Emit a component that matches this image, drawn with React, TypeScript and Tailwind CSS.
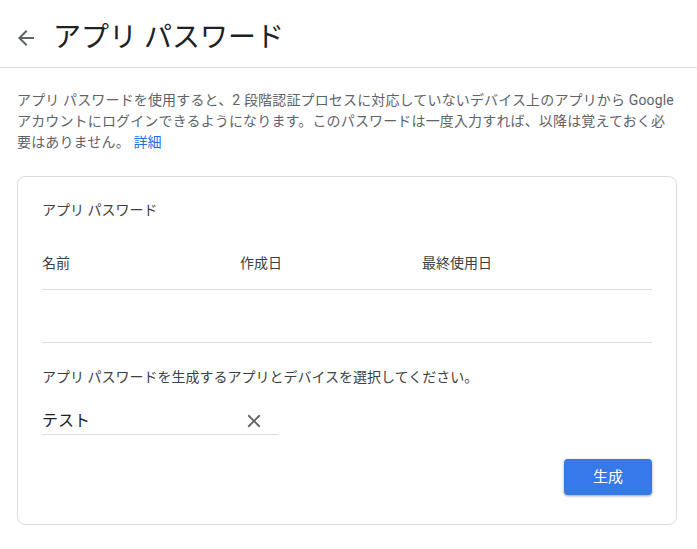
import React from "react";

const font = { fontFamily: "Roboto, 'Noto Sans CJK JP', sans-serif" };

const BackIcon = () => (
  <svg width="24" height="24" viewBox="0 0 24 24" className="fill-[#5f6368]">
    <path d="M20 11H7.83l5.59-5.59L12 4l-8 8 8 8 1.41-1.41L7.83 13H20v-2z" />
  </svg>
);

const CloseIcon = () => (
  <svg width="22" height="22" viewBox="0 0 24 24" className="fill-[#5f6368]">
    <path d="M19 6.41L17.59 5 12 10.59 6.41 5 5 6.41 10.59 12 5 17.59 6.41 19 12 13.41 17.59 19 19 17.59 13.41 12z" />
  </svg>
);

export default function App() {
  return (
    <div className="min-h-screen bg-white" style={font}>
      <header className="h-[68px] flex items-center pt-2 pl-[14px] gap-[15px] border-b border-[#dadce0]">
        <BackIcon />
        <h1 className="text-[28px] text-[#202124] leading-9">アプリ パスワード</h1>
      </header>

      <div className="pl-[17px] pr-[20px]">
        <p className="mt-[22px] text-[14px] leading-[21px] tracking-[0.15px] text-[#5f6368]">
          アプリ パスワードを使用すると、2 段階認証プロセスに対応していないデバイス上のアプリから Google
          アカウントにログインできるようになります。このパスワードは一度入力すれば、以降は覚えておく必要はありません。{" "}
          <a href="#" className="text-[#1a73e8]">
            詳細
          </a>
        </p>

        <section className="mt-[23px] border border-[#dadce0] rounded-lg px-6 pt-[23px] pb-[29px]">
          <h2 className="text-[14px] leading-5 text-[#3c4043]">アプリ パスワード</h2>

          <div className="mt-[18px] grid grid-cols-[198px_182px_1fr] h-[52px] items-center border-b border-[#dadce0] text-[14px] text-[#3c4043]">
            <span>名前</span>
            <span>作成日</span>
            <span>最終使用日</span>
          </div>
          <div className="h-[53px] border-b border-[#dadce0]" />

          <p className="mt-6 text-[14px] leading-5 text-[#3c4043]">
            アプリ パスワードを生成するアプリとデバイスを選択してください。
          </p>

          <div className="mt-5 w-[237px] h-[28px] flex items-center justify-between border-b border-[#dadce0]">
            <span className="text-[16px] text-[#202124]">テスト</span>
            <span className="mr-[14px] flex items-center">
              <CloseIcon />
            </span>
          </div>

          <div className="mt-6 flex justify-end">
            <button className="w-[88px] h-[36px] rounded bg-[#3679e8] text-white text-[15px] shadow-[0_1px_2px_rgba(60,64,67,0.3),0_1px_3px_1px_rgba(60,64,67,0.15)]">
              生成
            </button>
          </div>
        </section>
      </div>
    </div>
  );
}
